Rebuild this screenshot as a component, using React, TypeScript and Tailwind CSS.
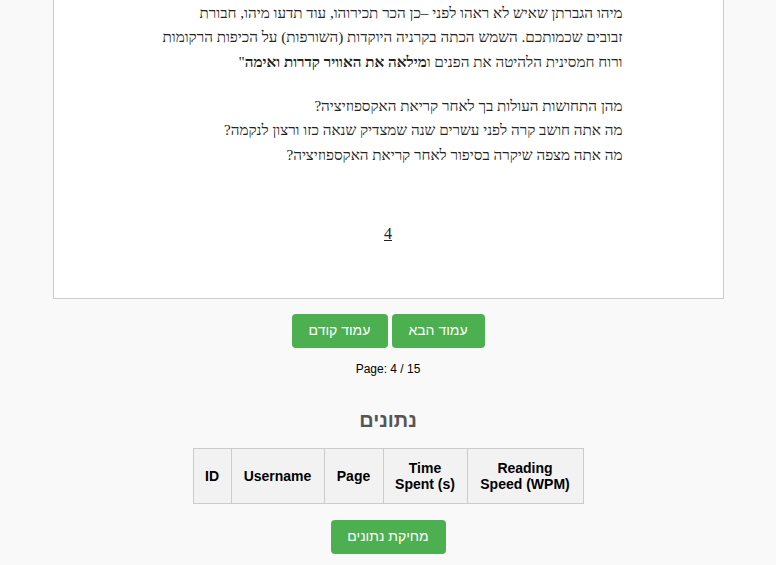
export default function App() {
  return (
    <div className="min-h-screen bg-[#f9f9f9] font-['Liberation_Sans',Arial,sans-serif] overflow-hidden">
      {/* reading panel (scrolled, top is above the window) */}
      <div className="mx-auto w-[671px] bg-white border border-t-0 border-[#ccc] px-[100px] pt-[1px] pb-[52px] text-[#222] font-['Liberation_Serif','Times_New_Roman',serif] text-[15.2px]" dir="rtl">
        <p className="leading-[24.4px] whitespace-nowrap">
          מיהו הגברתן שאיש לא ראהו לפני –כן הכר תכירוהו, עוד תדעו מיהו, חבורת
          <br />
          זבובים שכמותכם. השמש הכתה בקרניה היוקדות (השורפות) על הכיפות הרקומות
          <br />
          ורוח חמסינית הלהיטה את הפנים ו<b>מילאה את האוויר קדרות ואימה</b>"
        </p>
        <p className="mt-[20px] leading-[24.2px] whitespace-nowrap">
          מהן התחושות העולות בך לאחר קריאת האקספוזיציה?
          <br />
          מה אתה חושב קרה לפני עשרים שנה שמצדיק שנאה כזו ורצון לנקמה?
          <br />
          מה אתה מצפה שיקרה בסיפור לאחר קריאת האקספוזיציה?
        </p>
        <p className="mt-[55px] text-center text-[16px] leading-[24px] underline">4</p>
      </div>

      <div className="mt-[15px] flex justify-center gap-[4px]">
        <button className="h-[34px] w-[96px] rounded-[4px] bg-[#4caf50] text-white text-[14px]">עמוד קודם</button>
        <button className="h-[34px] w-[93px] rounded-[4px] bg-[#4caf50] text-white text-[14px]">עמוד הבא</button>
      </div>

      <p className="mt-[14px] text-center text-[12px] leading-[14px] text-black">Page: 4 / 15</p>

      <h2 className="mt-[32px] text-center text-[20px] leading-[24px] font-bold text-[#555]">נתונים</h2>

      <table className="mx-auto mt-[16px] table-fixed border-collapse w-[390px] text-[14px] leading-[16px] text-black">
        <colgroup>
          <col className="w-[38px]" />
          <col className="w-[93px]" />
          <col className="w-[59px]" />
          <col className="w-[84px]" />
          <col className="w-[116px]" />
        </colgroup>
        <thead>
          <tr className="bg-[#f2f2f2]">
            <th className="border border-[#ccc] h-[55px] font-bold">ID</th>
            <th className="border border-[#ccc] font-bold">Username</th>
            <th className="border border-[#ccc] font-bold">Page</th>
            <th className="border border-[#ccc] font-bold">Time<br />Spent (s)</th>
            <th className="border border-[#ccc] font-bold">Reading<br />Speed (WPM)</th>
          </tr>
        </thead>
      </table>

      <div className="mt-[16px] flex justify-center">
        <button className="h-[34px] w-[115px] rounded-[4px] bg-[#4caf50] text-white text-[14px]">מחיקת נתונים</button>
      </div>
    </div>
  )
}
